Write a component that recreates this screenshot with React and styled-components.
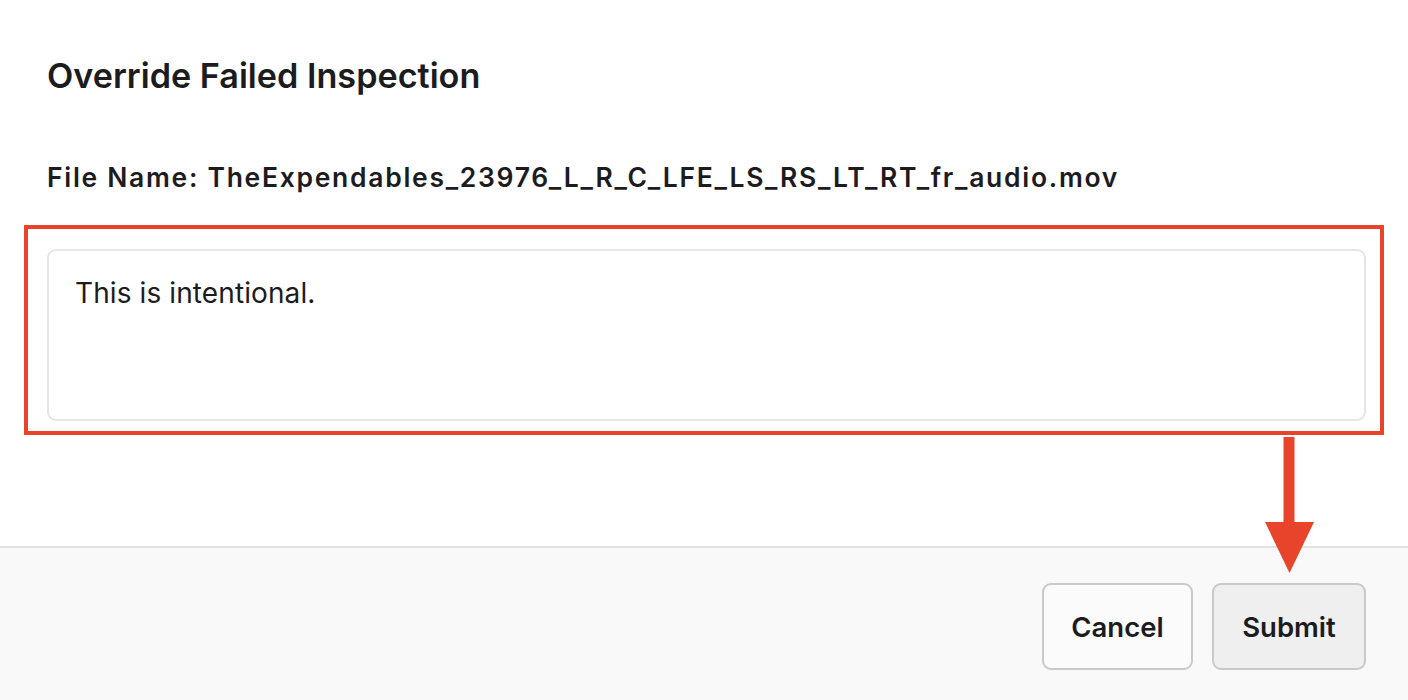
import React from "react";
import styled, { createGlobalStyle } from "styled-components";

const Global = createGlobalStyle`
  html, body { margin: 0; padding: 0; background: #ffffff; }
  body { font-family: Inter, "Noto Sans", "Liberation Sans", sans-serif; color: #1c1c1e; }
  * { box-sizing: border-box; }
`;

const Modal = styled.div`
  position: relative;
  width: 1408px;
  height: 700px;
  display: flex;
  flex-direction: column;
  background: #fff;
  overflow: hidden;
`;

const Body = styled.div`
  flex: 1;
  display: flex;
  flex-direction: column;
  padding: 54px 42px 0 47px;
`;

const Title = styled.h2`
  margin: 0;
  font-size: 34.2px;
  line-height: 44px;
  font-weight: 600;
`;

const FileLine = styled.p`
  margin: 63px 0 0;
  font-size: 26.5px;
  line-height: 32px;
  font-weight: 600;
  letter-spacing: 1.7px;
`;

const FieldWrap = styled.div`
  position: relative;
  margin-top: 56px;
`;

const TextArea = styled.textarea`
  display: block;
  width: 100%;
  height: 172px;
  resize: none;
  border: 2px solid #e6e6e6;
  border-radius: 9px;
  padding: 25px 26px;
  font-family: inherit;
  font-size: 28px;
  line-height: 34px;
  letter-spacing: 0.1px;
  color: #1c1c1e;
  background: #fff;
  outline: none;
`;

const Highlight = styled.div`
  position: absolute;
  left: -23px;
  right: -18px;
  top: -24px;
  bottom: -14px;
  border: 4px solid #e8432b;
  pointer-events: none;
`;

const Footer = styled.div`
  height: 154px;
  border-top: 2px solid #e3e3e3;
  background: #f9f9f9;
  display: flex;
  justify-content: flex-end;
  align-items: flex-start;
  gap: 19px;
  padding: 35px 42px 0 0;
`;

const Button = styled.button`
  height: 87px;
  padding: 0 27px;
  min-width: ${(p) => (p.$primary ? 154 : 151)}px;
  border: 2px solid #c9c9c9;
  border-radius: 9px;
  background: ${(p) => (p.$primary ? "#efefef" : "#fbfbfb")};
  font-family: inherit;
  font-size: 27.5px;
  font-weight: 600;
  color: #1c1c1e;
`;

const Arrow = styled.svg`
  position: absolute;
  left: 1265px;
  top: 437px;
  width: 49px;
  height: 136px;
  pointer-events: none;
`;

export default function App() {
  return (
    <>
      <Global />
      <Modal>
        <Body>
          <Title>Override Failed Inspection</Title>
          <FileLine>File Name: TheExpendables_23976_L_R_C_LFE_LS_RS_LT_RT_fr_audio.mov</FileLine>
          <FieldWrap>
            <TextArea defaultValue="This is intentional." />
            <Highlight />
          </FieldWrap>
        </Body>
        <Footer>
          <Button>Cancel</Button>
          <Button $primary>Submit</Button>
        </Footer>
        <Arrow viewBox="0 0 49 136">
          <rect x="18.5" y="0" width="11" height="88" fill="#e8432b" />
          <polygon points="0,85 49,85 24.5,136" fill="#e8432b" />
        </Arrow>
      </Modal>
    </>
  );
}
